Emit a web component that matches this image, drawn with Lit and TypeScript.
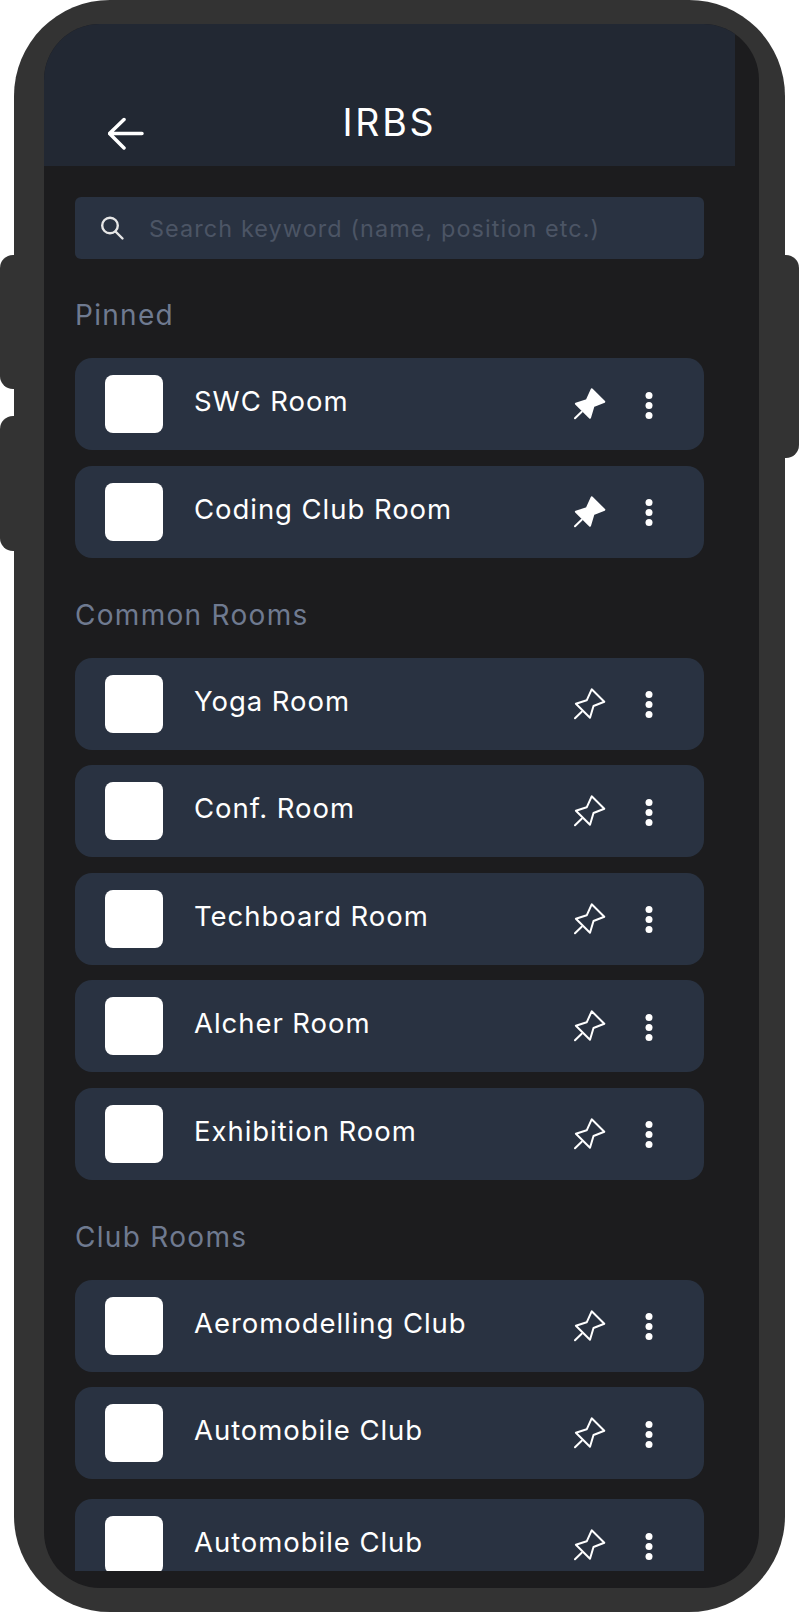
import {css, html, LitElement} from 'lit';
import {customElement} from 'lit/decorators.js';

interface Section {
  title: string;
  pinned: boolean;
  rooms: string[];
}

const SECTIONS: Section[] = [
  {title: 'Pinned', pinned: true, rooms: ['SWC Room', 'Coding Club Room']},
  {
    title: 'Common Rooms',
    pinned: false,
    rooms: ['Yoga Room', 'Conf. Room', 'Techboard Room', 'Alcher Room', 'Exhibition Room'],
  },
  {
    title: 'Club Rooms',
    pinned: false,
    rooms: ['Aeromodelling Club', 'Automobile Club', 'Automobile Club'],
  },
];

@customElement('app-root')
export class AppRoot extends LitElement {
  static styles = css`
    :host {
      display: block;
      width: 799px;
      height: 1612px;
      background: #fff;
      font-family: Inter, 'Liberation Sans', sans-serif;
    }

    .phone {
      position: relative;
      box-sizing: border-box;
      display: flex;
      width: 770.5px;
      height: 1612px;
      margin-left: 14px;
      padding: 24px 25.5px 24px 30px;
      background: #333;
      border-radius: 96px;
    }

    .side {
      position: absolute;
      width: 14px;
      background: #333;
    }

    .side.left {
      left: -14px;
      border-radius: 13px 0 0 13px;
    }

    .side.right {
      right: -14px;
      top: 255px;
      height: 203px;
      border-radius: 0 13px 13px 0;
    }

    .side.upper {
      top: 255px;
      height: 134px;
    }

    .side.lower {
      top: 416px;
      height: 135px;
    }

    .screen {
      flex: 1;
      display: flex;
      flex-direction: column;
      min-width: 0;
      overflow: hidden;
      background: #1c1c1e;
      border-radius: 56px;
    }

    .header {
      box-sizing: border-box;
      display: grid;
      grid-template-columns: 1fr auto 1fr;
      flex: none;
      width: 691px;
      height: 142px;
      padding: 77px 64px 0;
      background: #222833;
    }

    .back {
      margin-top: 14px;
    }

    .title {
      font-size: 37.5px;
      font-weight: 400;
      line-height: 44px;
      letter-spacing: 2.8px;
      color: #fff;
    }

    .content {
      box-sizing: border-box;
      width: 660px;
      height: 1405px;
      padding: 31px 0 0 31px;
      overflow: hidden;
    }

    .search {
      display: flex;
      align-items: center;
      gap: 24px;
      height: 62px;
      padding-left: 24px;
      background: #293241;
      border-radius: 6px;
    }

    .placeholder {
      font-size: 23.4px;
      letter-spacing: 1.1px;
      color: #4c5565;
      white-space: nowrap;
    }

    .section {
      margin-top: 42px;
    }

    .search + .section {
      margin-top: 41px;
    }

    .section-title {
      height: 30px;
      margin-bottom: 28px;
      font-size: 28px;
      line-height: 30px;
      letter-spacing: 1.3px;
      color: #6f7a90;
    }

    .rooms {
      display: flex;
      flex-direction: column;
      gap: 15.5px;
    }

    .room {
      display: flex;
      flex: none;
      align-items: center;
      height: 92px;
      padding: 0 51px 0 30px;
      background: #293241;
      border-radius: 17px;
    }

    .thumb {
      flex: none;
      width: 58px;
      height: 58px;
      margin-right: 31px;
      background: #fff;
      border-radius: 8px;
    }

    .name {
      flex: 1;
      margin-bottom: 6px;
      font-size: 27.5px;
      letter-spacing: 0.95px;
      color: #fff;
    }

    .pin {
      flex: none;
      margin: 2px 37px 0 0;
    }

    .dots {
      flex: none;
      margin-top: 3px;
    }

    .section:last-child .room:last-child {
      margin-top: 4.5px;
    }
  `;

  private renderBack() {
    return html`<svg class="back" width="36" height="36" viewBox="0 0 36 36" fill="none"
      stroke="#fff" stroke-width="3.5" stroke-linecap="round" stroke-linejoin="round">
      <path d="M1.5 18.5H34M16 4.5 1.5 18.5 16 33"></path>
    </svg>`;
  }

  private renderSearchIcon() {
    return html`<svg width="26" height="26" viewBox="0 0 26 26" fill="none"
      stroke="#e6e6e6" stroke-width="2.4" stroke-linecap="round">
      <circle cx="11" cy="10.5" r="7.8"></circle>
      <path d="M16.5 16.5 23.5 23.5"></path>
    </svg>`;
  }

  private renderPin(filled: boolean) {
    return html`<svg class="pin" width="34" height="40" viewBox="0 0 34 40"
      fill=${filled ? '#fff' : 'none'} stroke="#fff" stroke-width="2"
      stroke-linecap="round" stroke-linejoin="round">
      <path d="M17.7 4.3 30.3 16.7 19.5 21 16 32.7 1.9 18.7 12.7 15.3Z"></path>
      <path d="M7.7 26.7 1 33.3"></path>
    </svg>`;
  }

  private renderDots() {
    return html`<svg class="dots" width="8" height="30" viewBox="0 0 8 30" fill="#fff">
      <circle cx="4" cy="4.5" r="3.5"></circle>
      <circle cx="4" cy="14.5" r="3.5"></circle>
      <circle cx="4" cy="24.5" r="3.5"></circle>
    </svg>`;
  }

  render() {
    return html`
      <div class="phone">
        <div class="side left upper"></div>
        <div class="side left lower"></div>
        <div class="side right"></div>
        <div class="screen">
          <div class="header">
            ${this.renderBack()}
            <div class="title">IRBS</div>
          </div>
          <div class="content">
            <div class="search">
              ${this.renderSearchIcon()}
              <span class="placeholder">Search keyword (name, position etc.)</span>
            </div>
            ${SECTIONS.map(
              (section) => html`
                <div class="section">
                  <div class="section-title">${section.title}</div>
                  <div class="rooms">
                    ${section.rooms.map(
                      (room) => html`
                        <div class="room">
                          <div class="thumb"></div>
                          <div class="name">${room}</div>
                          ${this.renderPin(section.pinned)}
                          ${this.renderDots()}
                        </div>
                      `
                    )}
                  </div>
                </div>
              `
            )}
          </div>
        </div>
      </div>
    `;
  }
}

declare global {
  interface HTMLElementTagNameMap {
    'app-root': AppRoot;
  }
}
